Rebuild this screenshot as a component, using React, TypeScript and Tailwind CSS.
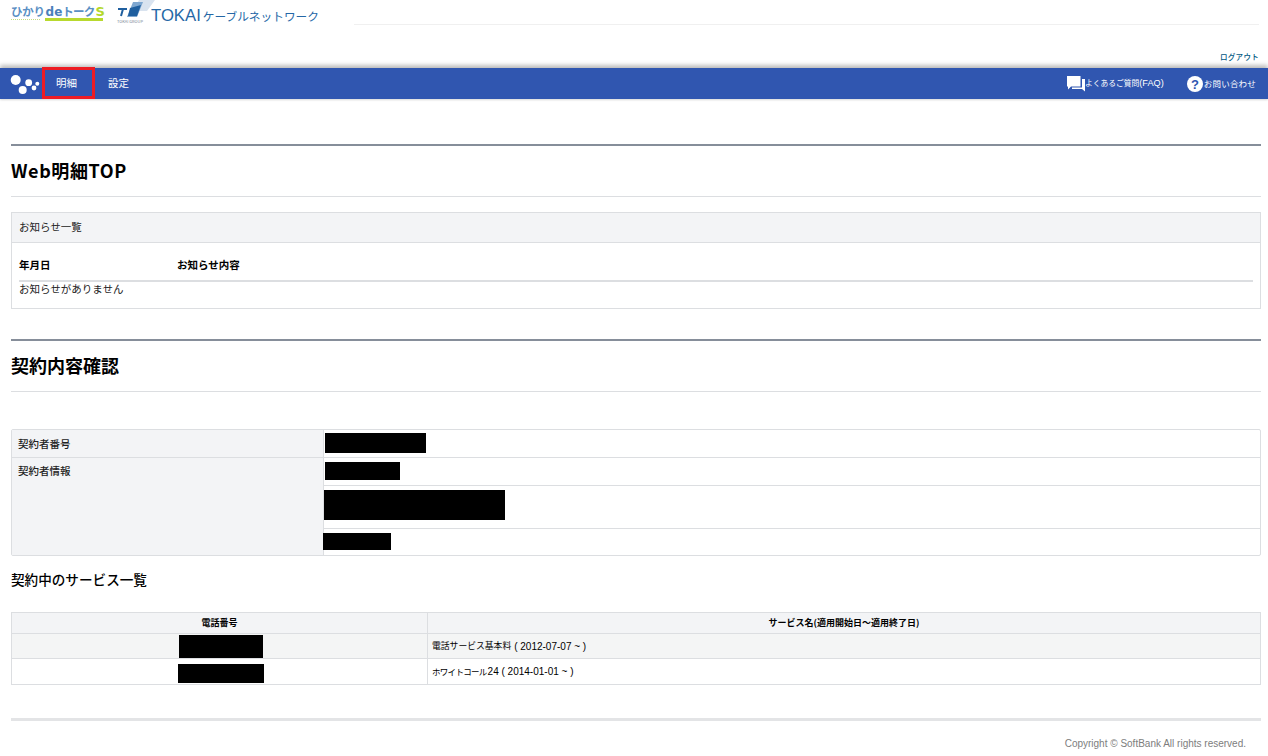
import React from "react";

const Black = ({ className }: { className: string }) => <div className={`bg-black ${className}`} />;

function HikariLogo() {
  return (
    <div className="flex flex-col w-[93px] ml-[11px] mt-[4px] shrink-0">
      <div className="flex items-baseline h-[14px] leading-[14px] whitespace-nowrap font-bold text-[11.5px] text-[#5a8fc4]">
        <span className="tracking-[-0.3px]">ひかり</span>
        <span className="text-[#4a80ba] text-[12px] ml-[1px]" style={{ fontFamily: '"DejaVu Sans", sans-serif' }}>de</span>
        <span className="tracking-[-0.8px]">トーク</span>
        <span className="text-[#b4d82a] text-[13px] ml-[1px]" style={{ fontFamily: '"DejaVu Sans", sans-serif' }}>S</span>
      </div>
      <div className="flex items-center">
        <div className="w-[29px] h-px border-t border-dotted border-[#c5dc80]" />
        <div className="h-[3px] ml-[5px] w-[58px] bg-[#b8d92e]" />
      </div>
    </div>
  );
}

function TokaiLogo() {
  return (
    <div className="flex items-start ml-[13px] h-[24px] shrink-0">
      <div className="flex flex-col w-[40px]">
        <svg width="40" height="19" viewBox="0 0 40 19" className="block">
          <polygon points="22,0 38,0 30,11 15,11" fill="#d9e3ef" />
          <polygon points="16,2 26,2 20,17 10,17" fill="#7ea7d0" />
          <polygon points="13,8 24,5 20,16 11,16" fill="#1f5f9f" />
          <path d="M1 9h9M6 9l-2 7" stroke="#1f5f9f" strokeWidth="2" fill="none" />
        </svg>
        <span className="text-[4px] leading-[4px] text-[#7a8796] whitespace-nowrap">TOKAI GROUP</span>
      </div>
      <span
        className="ml-[-6px] mt-[6px] text-[#2567a6] text-[16.7px] leading-[20px] whitespace-nowrap"
        style={{ fontFamily: '"Liberation Sans", sans-serif' }}
      >
        TOKAI
        <span className="ml-[2px] text-[11.7px]" style={{ fontFamily: '"Noto Sans CJK JP", sans-serif' }}>
          ケーブルネットワーク
        </span>
      </span>
    </div>
  );
}

function Logo() {
  return (
    <svg width="31" height="22" viewBox="0 0 31 22" className="block">
      <circle cx="5.7" cy="7" r="5" fill="#fff" />
      <circle cx="18.7" cy="9.7" r="3.4" fill="#fff" />
      <circle cx="12.7" cy="17" r="4" fill="#fff" />
      <circle cx="24" cy="15" r="2.4" fill="#fff" />
      <circle cx="27.3" cy="10.8" r="2" fill="#fff" />
    </svg>
  );
}

const SectionHead = ({ children, className = "" }: { children: React.ReactNode; className?: string }) => (
  <div className="border-t-2 border-b border-t-[#868e9a] border-b-[#dcdee1] h-[53px] flex items-center pb-[2px]">
    <h2 className={`text-[18px] font-bold text-black leading-[24px] ${className}`}>{children}</h2>
  </div>
);

export default function App() {
  return (
    <div
      className="w-[1268px] h-[756px] overflow-hidden bg-white text-[#222]"
      style={{ fontFamily: '"Noto Sans CJK JP", "Noto Sans", "Liberation Sans", sans-serif' }}
    >
      <header className="h-[68px] relative">
        <div className="flex">
          <HikariLogo />
          <TokaiLogo />
          <div className="ml-[35px] mt-[24px] h-px w-[905px] bg-[#f0f0f0]" />
        </div>
        <a className="absolute right-[9px] top-[51px] text-[7.5px] leading-[12px] tracking-[0.3px] font-medium text-[#00577f]">ログアウト</a>
      </header>

      <nav className="h-[31px] bg-[#3056b0] flex items-center relative shadow-[0_-3px_4px_rgba(0,0,0,0.25),0_1px_2px_rgba(0,0,0,0.15)] text-white">
        <div className="ml-[10px] w-[32px]">
          <Logo />
        </div>
        <div className="w-[53px] h-[32px] -mt-[1px] border-[3px] border-[#ed1c24] flex items-center pl-[11px] pb-[1px] text-[10.5px]">
          明細
        </div>
        <div className="ml-[13px] pb-[2px] text-[10.5px]">設定</div>
        <div className="ml-auto flex items-center">
          <svg width="18" height="16" viewBox="0 0 18 16" className="block">
            <path d="M0 0h13.5v10.5H4L1 13.5v-3H0z" fill="#fff" />
            <path d="M15 3h3v12.5l-3-2.5H5v-1.5h10z" fill="#fff" />
          </svg>
          <span className="text-[7.75px] whitespace-nowrap">
            よくあるご質問
            <span className="text-[9.2px]" style={{ fontFamily: '"Liberation Sans", sans-serif' }}>(FAQ)</span>
          </span>
          <svg width="16" height="16" viewBox="0 0 16 16" className="block ml-[23px]">
            <circle cx="8" cy="8" r="8" fill="#fff" />
            <text x="8" y="12.8" textAnchor="middle" fontSize="13" fontWeight="700" fill="#3056b0" fontFamily="Liberation Sans">?</text>
          </svg>
          <span className="ml-[1px] mr-[12px] text-[8.5px] tracking-[0.2px] whitespace-nowrap">お問い合わせ</span>
        </div>
      </nav>

      <main className="ml-[11px] w-[1250px] pt-[45px]">
        <SectionHead className="tracking-[0.6px]">Web明細TOP</SectionHead>

        <section className="mt-[15px] border border-[#dcdee1] h-[97px]">
          <div className="h-[30px] bg-[#f3f4f6] border-b border-[#dcdee1] px-[7px] pb-[2px] flex items-center text-[10.5px]">
            お知らせ一覧
          </div>
          <div className="px-[7px]">
            <div className="flex h-[39px] pt-[14px] border-b-2 border-[#dcdee1] text-[10.5px] font-bold leading-[16px] text-black">
              <span className="w-[158px]">年月日</span>
              <span>お知らせ内容</span>
            </div>
            <div className="text-[10.5px] leading-[13px]">お知らせがありません</div>
          </div>
        </section>

        <div className="mt-[30px]">
          <SectionHead className="-mt-[1px]">契約内容確認</SectionHead>
        </div>

        <section className="mt-[37px] h-[127px] border border-[#dcdee1] rounded-[2px] flex text-[10.5px]">
          <div className="w-[312px] shrink-0 bg-[#f3f4f6] border-r border-[#dcdee1] flex flex-col font-medium">
            <div className="h-[28px] border-b border-[#dcdee1] pl-[6px] pt-[6px] leading-[15px]">契約者番号</div>
            <div className="pl-[6px] pt-[5px] leading-[15px]">契約者情報</div>
          </div>
          <div className="flex-1 flex flex-col">
            <div className="h-[28px] border-b border-[#dcdee1] pl-[1px] pt-[3px]">
              <Black className="w-[101px] h-[20px]" />
            </div>
            <div className="h-[28px] border-b border-[#dcdee1] pl-[1px] pt-[4px]">
              <Black className="w-[75px] h-[18px]" />
            </div>
            <div className="h-[43px] border-b border-[#dcdee1] pt-[4px]">
              <Black className="w-[181px] h-[30px]" />
            </div>
            <div className="flex-1 pt-[4px] -ml-px">
              <Black className="w-[68px] h-[17px]" />
            </div>
          </div>
        </section>

        <h3 className="mt-[13px] text-[13.6px] font-medium leading-[21px] text-black">契約中のサービス一覧</h3>

        <section className="mt-[22px] h-[73px] border border-[#dcdee1] text-[9px] text-black">
          <div className="flex h-[21px] bg-[#f3f4f6] border-b border-[#dcdee1] font-bold">
            <div className="w-[416px] border-r border-[#dcdee1] flex items-center justify-center">電話番号</div>
            <div className="flex-1 flex items-center justify-center">サービス名(適用開始日～適用終了日)</div>
          </div>
          <div className="flex h-[25px] bg-[#f4f5f5] border-b border-[#dcdee1]">
            <div className="w-[416px] border-r border-[#dcdee1] flex justify-center pt-[1px] pl-[2px]">
              <Black className="w-[84px] h-[23px]" />
            </div>
            <div className="flex-1 flex items-center pl-[4px] text-[8.8px]">
              電話サービス基本料
              <span className="ml-[3px] text-[10px]" style={{ fontFamily: '"Liberation Sans", sans-serif' }}>( 2012-07-07 ~ )</span>
            </div>
          </div>
          <div className="flex h-[25px]">
            <div className="w-[416px] border-r border-[#dcdee1] flex justify-center pt-[5px] pl-[2px]">
              <Black className="w-[86px] h-[19px]" />
            </div>
            <div className="flex-1 flex items-center pl-[4px] text-[8.5px] tracking-[-0.7px]">
              ホワイトコール
              <span className="ml-[1px] text-[10px] tracking-normal" style={{ fontFamily: '"Liberation Sans", sans-serif' }}>24 ( 2014-01-01 ~ )</span>
            </div>
          </div>
        </section>

        <div className="mt-[33px] h-[3px] bg-[#e3e4e6]" />
        <p
          className="mt-[17px] pr-[15px] text-right text-[10px] leading-[12px] text-[#7d7d7d]"
          style={{ fontFamily: '"Liberation Sans", sans-serif' }}
        >
          Copyright © SoftBank All rights reserved.
        </p>
      </main>
    </div>
  );
}
